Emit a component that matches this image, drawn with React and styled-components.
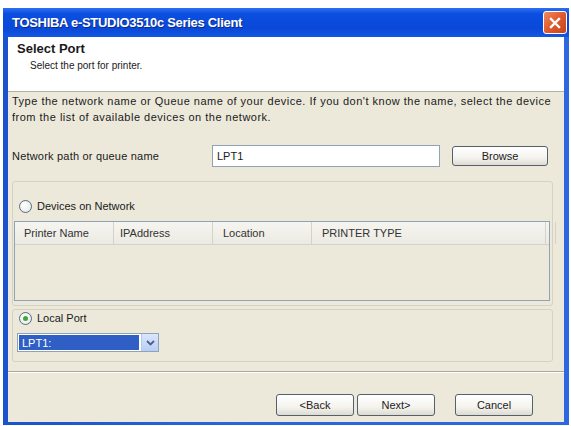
import styled, { createGlobalStyle } from "styled-components";

const GlobalStyle = createGlobalStyle`
  html, body {
    margin: 0;
    padding: 0;
    background: #ffffff;
  }
  body {
    font-family: "Liberation Sans", Arial, sans-serif;
    font-size: 11px;
    color: #1a1a1a;
  }
`;

const Page = styled.div`
  padding: 8px 0 0 3px;
`;

const Window = styled.div`
  width: 566px;
  box-sizing: border-box;
  background: linear-gradient(to right, #1c52cc, #2a64dc 40%, #2d68e0);
  padding: 0 5px 3px 5px;
  display: flex;
  flex-direction: column;
`;

const TitleBar = styled.div`
  height: 29px;
  margin: 0 -5px;
  background: linear-gradient(to bottom, #2e6ff0 0%, #0b4ee0 20%, #0a48d8 70%, #1457e4 100%);
  display: flex;
  align-items: center;
  justify-content: space-between;
  padding: 0 2px 0 9px;
`;

const Title = styled.span`
  color: #ffffff;
  font-weight: bold;
  font-size: 13px;
  letter-spacing: -0.3px;
  text-shadow: 1px 1px 0 #0a2a8a;
`;

const CloseButton = styled.div`
  width: 24px;
  height: 23px;
  box-sizing: border-box;
  border: 1px solid #ffffff;
  border-radius: 3px;
  background: linear-gradient(135deg, #f08a62 0%, #df5a2c 50%, #c8441c 100%);
  display: flex;
  align-items: center;
  justify-content: center;
`;

const Header = styled.div`
  height: 55px;
  background: #ffffff;
  border-bottom: 1px solid #b4b0a0;
  padding: 4px 0 0 9px;
  box-sizing: border-box;
`;

const HeaderTitle = styled.div`
  font-weight: bold;
  font-size: 13px;
  line-height: 14px;
  margin-top: 1px;
`;

const HeaderSub = styled.div`
  font-size: 10px;
  line-height: 12px;
  margin: 4px 0 0 13px;
`;

const Body = styled.div`
  background: #ece9da;
  padding: 1px 0 6px 4px;
  display: flex;
  flex-direction: column;
`;

const Intro = styled.p`
  margin: 0;
  line-height: 16px;
  letter-spacing: 0.5px;
  white-space: nowrap;
`;

const PathRow = styled.div`
  display: flex;
  align-items: center;
  margin-top: 20px;
  height: 22px;
`;

const PathLabel = styled.span`
  width: 200px;
  letter-spacing: 0.2px;
`;

const TextInput = styled.div`
  width: 228px;
  height: 22px;
  box-sizing: border-box;
  border: 1px solid #8fa3b8;
  background: #ffffff;
  padding: 0 4px;
  display: flex;
  align-items: center;
  font-size: 11px;
`;

const Button = styled.button`
  width: ${(p) => p.$w || 78}px;
  height: ${(p) => p.$h || 22}px;
  margin-left: ${(p) => p.$ml || 0}px;
  box-sizing: border-box;
  border: 1px solid #55606e;
  border-radius: 3px;
  background: linear-gradient(to bottom, #ffffff 0%, #f4f3ee 60%, #dedbd0 100%);
  font-family: "Liberation Sans", Arial, sans-serif;
  font-size: 11px;
  color: #222;
  padding: 0;
`;

const GroupBox = styled.div`
  width: 541px;
  box-sizing: border-box;
  margin-top: ${(p) => p.$mt}px;
  border: 1px solid #d6d2c2;
  border-radius: 3px;
  padding: ${(p) => p.$pad};
  display: flex;
  flex-direction: column;
`;

const RadioRow = styled.label`
  display: flex;
  align-items: center;
  gap: 5px;
  height: 14px;
  margin-left: 5px;
`;

const RadioCircle = styled.span`
  width: 13px;
  height: 13px;
  box-sizing: border-box;
  border-radius: 50%;
  border: 1px solid #4f6d8a;
  background: radial-gradient(circle at 40% 40%, #ffffff 0%, #e6e4dc 100%);
  display: flex;
  align-items: center;
  justify-content: center;

  &::after {
    content: "";
    width: 5px;
    height: 5px;
    border-radius: 50%;
    background: ${(p) => (p.$on ? "#3fa83a" : "transparent")};
  }
`;

const ListView = styled.div`
  margin-top: 8px;
  width: 536px;
  height: 80px;
  box-sizing: border-box;
  border: 1px solid #8fa3b8;
  background: #ece9da;
`;

const ListHeader = styled.div`
  display: flex;
  height: 22px;
  background: linear-gradient(to bottom, #f6f5f0, #ebeae2);
  border-bottom: 1px solid #d6d3c6;
`;

const ListColumn = styled.div`
  width: ${(p) => p.$w}px;
  flex: ${(p) => (p.$w ? "none" : 1)};
  box-sizing: border-box;
  padding-left: ${(p) => p.$pl || 9}px;
  display: flex;
  align-items: center;
  border-right: 1px solid #d6d3c6;
  font-size: 11px;
  color: #333;
`;

const Combo = styled.div`
  display: flex;
  margin: 8px 0 0 3px;
  width: 142px;
  height: 19px;
  box-sizing: border-box;
  border: 1px solid #8fa3b8;
  background: #ffffff;
`;

const ComboValue = styled.div`
  flex: 1;
  background: #2f5fc4;
  color: #ffffff;
  padding-left: 3px;
  display: flex;
  align-items: center;
  margin: 1px 2px 1px 1px;
`;

const ComboArrow = styled.div`
  width: 16px;
  background: linear-gradient(to bottom, #dbe6fd, #b9cdf6);
  border-left: 1px solid #b8c8ea;
  display: flex;
  align-items: center;
  justify-content: center;
`;

const Separator = styled.div`
  margin: 9px 0 0 -4px;
  height: 0;
  border-top: 1px solid #aca899;
  border-bottom: 1px solid #ffffff;
`;

const ButtonRow = styled.div`
  display: flex;
  justify-content: flex-end;
  margin-top: 21px;
  padding-right: 31px;
`;

export default function App() {
  return (
    <Page>
      <GlobalStyle />
      <Window>
        <TitleBar>
          <Title>TOSHIBA e-STUDIO3510c Series Client</Title>
          <CloseButton>
            <svg width="12" height="12" viewBox="0 0 12 12">
              <path d="M2 2 L10 10 M10 2 L2 10" stroke="#ffffff" strokeWidth="2.4" strokeLinecap="square" />
            </svg>
          </CloseButton>
        </TitleBar>
        <Header>
          <HeaderTitle>Select Port</HeaderTitle>
          <HeaderSub>Select the port for printer.</HeaderSub>
        </Header>
        <Body>
          <Intro>
            Type the network name or Queue name of your device. If you don't know the name, select the device
            <br />
            from the list of available devices on the network.
          </Intro>
          <PathRow>
            <PathLabel>Network path or queue name</PathLabel>
            <TextInput>LPT1</TextInput>
            <Button $w={96} $h={20} $ml={12}>Browse</Button>
          </PathRow>
          <GroupBox $mt={14} $pad="17px 2px 4px 1px">
            <RadioRow>
              <RadioCircle />
              Devices on Network
            </RadioRow>
            <ListView>
              <ListHeader>
                <ListColumn $w={99}>Printer Name</ListColumn>
                <ListColumn $w={99} $pl={6}>IPAddress</ListColumn>
                <ListColumn $w={99} $pl={10}>Location</ListColumn>
                <ListColumn $w={234} $pl={10}>PRINTER TYPE</ListColumn>
                <ListColumn />
              </ListHeader>
            </ListView>
          </GroupBox>
          <GroupBox $mt={3} $pad="1px 2px 9px 1px">
            <RadioRow>
              <RadioCircle $on />
              Local Port
            </RadioRow>
            <Combo>
              <ComboValue>LPT1:</ComboValue>
              <ComboArrow>
                <svg width="9" height="6" viewBox="0 0 9 6">
                  <path d="M1 1 L4.5 4.5 L8 1" stroke="#4d6185" strokeWidth="1.8" fill="none" />
                </svg>
              </ComboArrow>
            </Combo>
          </GroupBox>
          <Separator />
          <ButtonRow>
            <Button>&lt;Back</Button>
            <Button $ml={3}>Next&gt;</Button>
            <Button $ml={20}>Cancel</Button>
          </ButtonRow>
        </Body>
      </Window>
    </Page>
  );
}
